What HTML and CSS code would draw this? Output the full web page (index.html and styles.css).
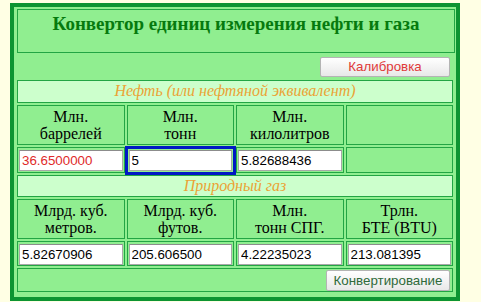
FILE: index.html
```html
<!DOCTYPE html>
<html>
<head>
    <title>Конвертор единиц измерения нефти и газа</title>
    <link rel="stylesheet" href="styles.css">
</head>
<body>
    <div class="converter">
        <div class="title">Конвертор единиц измерения нефти и газа</div>

        <div class="toolbar">
            <button class="calib-button">Калибровка</button>
        </div>

        <div class="section">Нефть (или нефтяной эквивалент)</div>

        <div class="head">Млн.<br>баррелей</div>
        <div class="head">Млн.<br>тонн</div>
        <div class="head">Млн.<br>килолитров</div>
        <div class="head"></div>

        <div class="field"><input type="text" class="red" value="36.6500000"></div>
        <div class="field"><input type="text" class="active" value="5"></div>
        <div class="field"><input type="text" value="5.82688436"></div>
        <div class="field"></div>

        <div class="section">Природный газ</div>

        <div class="head">Млрд. куб.<br>метров.</div>
        <div class="head">Млрд. куб.<br>футов.</div>
        <div class="head">Млн.<br>тонн СПГ.</div>
        <div class="head">Трлн.<br>БТЕ (BTU)</div>

        <div class="field"><input type="text" value="5.82670906"></div>
        <div class="field"><input type="text" value="205.606500"></div>
        <div class="field"><input type="text" value="4.22235023"></div>
        <div class="field"><input type="text" value="213.081395"></div>

        <div class="actions">
            <button class="convert-button">Конвертирование</button>
        </div>
    </div>
</body>
</html>
```
FILE: styles.css
```css
body {
    margin: 0;
    padding: 0;
    background-color: #ffffe4;
    font-family: "Liberation Serif", "Times New Roman", serif;
}

.converter {
    box-sizing: border-box;
    width: 450px;
    margin: 3px 0 0 10px;
    padding: 2px 3px 5px 3px;
    border: 4px solid #0d9432;
    background-color: #90ee90;
    display: grid;
    grid-template-columns: repeat(4, 1fr);
    grid-template-rows: 44px 23px 23px 40px 26px 22px 40px 25px 24px;
    gap: 2px;
}

.title,
.section,
.head,
.field,
.actions {
    box-sizing: border-box;
    border: 1px solid #22a544;
}

.title {
    grid-column: 1 / 5;
    margin-right: -2px;
    padding-top: 3px;
    text-align: center;
    font-size: 19px;
    font-weight: bold;
    color: #067a0e;
}

.toolbar {
    grid-column: 1 / 5;
    display: flex;
    justify-content: flex-end;
    align-items: center;
    padding-right: 3px;
}

.section {
    grid-column: 1 / 5;
    background-color: #ccffcc;
    text-align: center;
    font-size: 16px;
    font-style: italic;
    color: #eba336;
    line-height: 20px;
}

.head {
    padding-top: 2px;
    text-align: center;
    font-size: 16px;
    line-height: 17px;
    color: #000;
}

.field {
    padding: 2px 1px 1px 1px;
}

.field input {
    box-sizing: border-box;
    width: 100%;
    height: 21px;
    margin: 0;
    padding: 0 2px;
    border: 1px solid #a8a8a8;
    border-top-color: #8c8c8c;
    background-color: #fff;
    font-family: "Liberation Sans", Arial, sans-serif;
    font-size: 13.33px;
    color: #000;
}

.field input.red {
    color: #e02a2a;
}

.field input.active {
    outline: 3px solid #0018c4;
    outline-offset: 1px;
}

.actions {
    grid-column: 1 / 5;
    display: flex;
    justify-content: flex-end;
    align-items: center;
    padding-right: 2px;
}

.calib-button,
.convert-button {
    height: 20px;
    padding: 0 6px;
    border: 1px solid #b4b4b4;
    border-radius: 2px;
    background: linear-gradient(#ffffff, #e8e8e8);
    font-family: "Liberation Sans", Arial, sans-serif;
    font-size: 13.33px;
    cursor: pointer;
}

.calib-button {
    width: 130px;
    color: #e03a3a;
}

.convert-button {
    width: 124px;
    height: 21px;
    color: #2f6a3a;
}
```
